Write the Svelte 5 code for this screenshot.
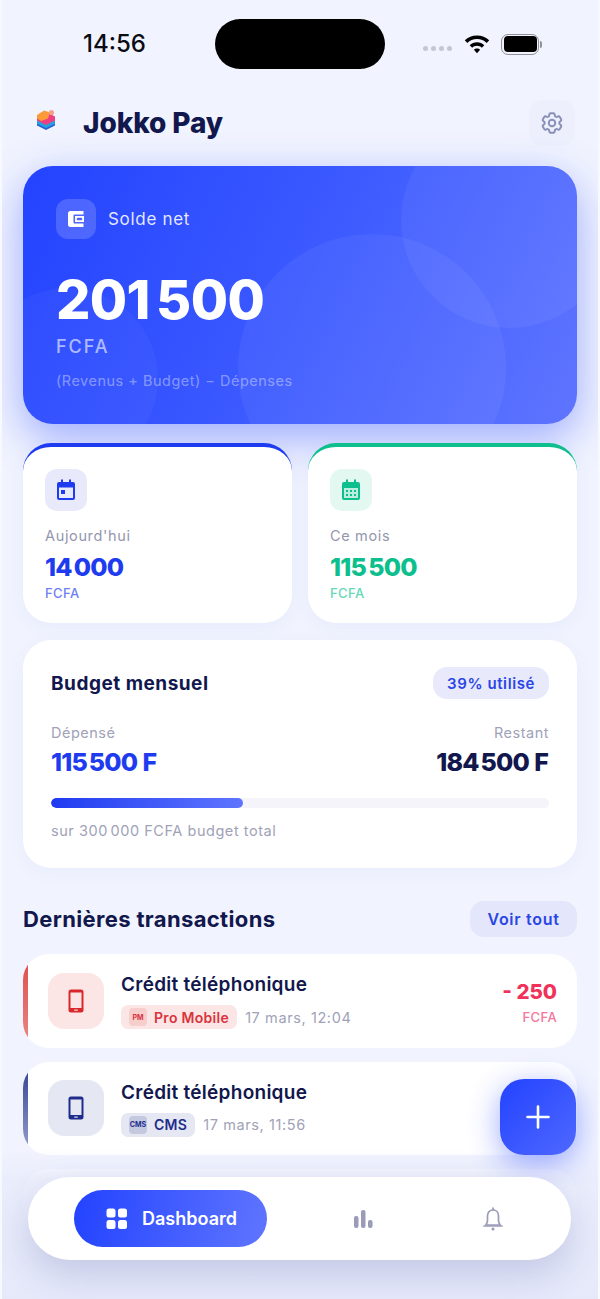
<script>
  const transactions = [
    { title: 'Crédit téléphonique', code: 'PM', name: 'Pro Mobile', date: '17 mars, 12:04', tone: 'red', amount: '- 250' },
    { title: 'Crédit téléphonique', code: 'CMS', name: 'CMS', date: '17 mars, 11:56', tone: 'navy', amount: '' }
  ];
</script>

<div class="phone">
  <div class="status">
    <span class="time">14:56</span>
    <div class="island"></div>
    <div class="status-right">
      <div class="dots"><i></i><i></i><i></i><i></i></div>
      <svg class="wifi" width="28" height="22" viewBox="0 0 28 20">
        <path d="M14 1.500c4.700 0 9 1.800 12.200 4.800l-2.500 2.600C21.200 6.500 17.800 5 14 5S6.800 6.500 4.300 8.900L1.800 6.300C5 3.300 9.300 1.500 14 1.500Z" />
        <path d="M14 8.300c2.800 0 5.400 1.100 7.300 2.900l-2.500 2.500c-1.300-1.200-3-1.900-4.800-1.900s-3.500.7-4.800 1.900l-2.500-2.500c1.900-1.800 4.500-2.900 7.300-2.900Z" />
        <path d="M14 14.600c1.200 0 2.300.5 3.100 1.200L14 19.200l-3.100-3.400c.8-.7 1.900-1.200 3.100-1.200Z" />
      </svg>
      <div class="battery"><div class="battery-fill"></div></div>
      <div class="battery-cap"></div>
    </div>
  </div>

  <header class="top">
    <div class="brand">
      <svg class="logo" width="20" height="22" viewBox="0 0 20 22">
        <path d="M10 10 19 14.500 19 16.500 10 21 1 16.500 1 14.500Z" fill="#2a63d8" />
        <path d="M1 11 10 6.500 19 11 19 14.500 10 19 1 14.500Z" fill="#23a3e0" />
        <path d="M1 7.500 10 3 19 7.500 19 11.500 10 16 1 11.500Z" fill="#ef3f83" />
        <path d="M1 6 8 1.500 14 3.500 12 9.500 5 12 1 9.500Z" fill="#fb9a37" />
        <circle cx="15.500" cy="3.500" r="2.600" fill="#f5a08c" />
      </svg>
      <h1>Jokko Pay</h1>
    </div>
    <button class="gear" aria-label="Paramètres">
      <svg width="26" height="26" viewBox="0 0 24 24" fill="none" stroke="#8a8fb5" stroke-width="1.800" stroke-linejoin="round">
        <path d="M9.594 3.940c.09-.542.56-.94 1.110-.94h2.593c.55 0 1.020.398 1.110.94l.213 1.281c.063.374.313.686.645.870.074.040.147.083.22.127.325.196.72.257 1.075.124l1.217-.456a1.125 1.125 0 0 1 1.370.49l1.296 2.247a1.125 1.125 0 0 1-.26 1.431l-1.003.827c-.293.241-.438.613-.43.992a7.723 7.723 0 0 1 0 .255c-.008.378.137.75.43.991l1.004.827c.424.35.534.955.26 1.430l-1.298 2.247a1.125 1.125 0 0 1-1.369.491l-1.217-.456c-.355-.133-.75-.072-1.076.124a6.470 6.470 0 0 1-.22.128c-.331.183-.581.495-.644.869l-.213 1.281c-.09.543-.56.94-1.110.94h-2.594c-.55 0-1.019-.398-1.110-.94l-.213-1.281c-.062-.374-.312-.686-.644-.87a6.520 6.520 0 0 1-.22-.127c-.325-.196-.72-.257-1.076-.124l-1.217.456a1.125 1.125 0 0 1-1.369-.49l-1.297-2.247a1.125 1.125 0 0 1 .26-1.431l1.004-.827c.292-.24.437-.613.43-.991a6.932 6.932 0 0 1 0-.255c.007-.38-.138-.751-.43-.992l-1.004-.827a1.125 1.125 0 0 1-.26-1.430l1.297-2.247a1.125 1.125 0 0 1 1.370-.491l1.216.456c.356.133.751.072 1.076-.124.072-.044.146-.086.22-.128.332-.183.582-.495.644-.869l.214-1.280Z" />
        <circle cx="12" cy="12" r="3" />
      </svg>
    </button>
  </header>

  <section class="hero">
    <div class="blob blob-a"></div>
    <div class="blob blob-b"></div>
    <div class="blob blob-c"></div>
    <div class="hero-head">
      <div class="hero-icon">
        <svg width="18" height="18" viewBox="0 0 18 18">
          <path d="M3.500 1h13v3.500h-9a1 1 0 0 0-1 1v7a1 1 0 0 0 1 1h9V17h-13A2.500 2.500 0 0 1 1 14.500v-11A2.500 2.500 0 0 1 3.500 1Z" fill="#fff" />
          <path fill-rule="evenodd" d="M8 6h9v6H8Zm3 1.700a1.300 1.300 0 1 0 0 2.600h3a1.300 1.300 0 1 0 0-2.600Z" fill="#fff" />
        </svg>
      </div>
      <span>Solde net</span>
    </div>
    <div class="hero-value">201 500</div>
    <div class="hero-cur">FCFA</div>
    <div class="hero-note">(Revenus + Budget) − Dépenses</div>
  </section>

  <div class="stats">
    <div class="stat stat-blue">
      <div class="stat-icon">
        <svg width="20" height="22" viewBox="0 0 20 22">
          <path fill-rule="evenodd" d="M5 0.500h2V3h6V0.500h2V3h2a2 2 0 0 1 2 2v14a2 2 0 0 1-2 2H3a2 2 0 0 1-2-2V5a2 2 0 0 1 2-2h2ZM3 8.500V19h14V8.500Z" fill="#1f3bf0" />
          <rect x="5" y="11" width="4" height="4" fill="#1f3bf0" />
        </svg>
      </div>
      <div class="stat-label">Aujourd'hui</div>
      <div class="stat-value">14 000</div>
      <div class="stat-cur">FCFA</div>
    </div>
    <div class="stat stat-green">
      <div class="stat-icon">
        <svg width="20" height="22" viewBox="0 0 20 22">
          <path fill-rule="evenodd" d="M5 0.500h2V3h6V0.500h2V3h2a2 2 0 0 1 2 2v14a2 2 0 0 1-2 2H3a2 2 0 0 1-2-2V5a2 2 0 0 1 2-2h2ZM3 9v10h14V9Z" fill="#0cbf8c" />
          <path d="M3 9h14v10H3Z" fill="#0cbf8c" opacity=".18" />
          <g fill="#0cbf8c">
            <rect x="5" y="11" width="2" height="2" /><rect x="9" y="11" width="2" height="2" /><rect x="13" y="11" width="2" height="2" />
            <rect x="5" y="15" width="2" height="2" /><rect x="9" y="15" width="2" height="2" /><rect x="13" y="15" width="2" height="2" />
          </g>
        </svg>
      </div>
      <div class="stat-label">Ce mois</div>
      <div class="stat-value">115 500</div>
      <div class="stat-cur">FCFA</div>
    </div>
  </div>

  <section class="budget">
    <div class="budget-head">
      <h2>Budget mensuel</h2>
      <span class="pill">39% utilisé</span>
    </div>
    <div class="budget-cols">
      <div>
        <div class="budget-label">Dépensé</div>
        <div class="budget-value blue"><span class="num">115 500</span> F</div>
      </div>
      <div class="right">
        <div class="budget-label">Restant</div>
        <div class="budget-value"><span class="num">184 500</span> F</div>
      </div>
    </div>
    <div class="bar"><div class="bar-fill" style="width: 38.500%"></div></div>
    <div class="budget-note">sur <span class="note-num">300 000</span> FCFA budget total</div>
  </section>

  <div class="section-head">
    <h2>Dernières transactions</h2>
    <button class="see-all">Voir tout</button>
  </div>

  <div class="list">
    {#each transactions as tx}
      <div class="tx {tx.tone}">
        <div class="tx-icon">
          <svg width="16" height="24" viewBox="0 0 16 24">
            <path fill-rule="evenodd" d="M3 0.500h10A2.500 2.500 0 0 1 15.500 3v18a2.500 2.500 0 0 1-2.500 2.500H3A2.500 2.500 0 0 1 .5 21V3A2.500 2.500 0 0 1 3 .5ZM2.500 3.500v15.500h11V3.500Z" fill="currentColor" />
            <rect x="6" y="20.500" width="4" height="1.200" rx=".6" fill="#fff" opacity=".8" />
          </svg>
        </div>
        <div class="tx-main">
          <div class="tx-title">{tx.title}</div>
          <div class="tx-meta">
            <span class="chip"><span class="chip-code">{tx.code}</span>{tx.name}</span>
            <span class="tx-date">{tx.date}</span>
          </div>
        </div>
        {#if tx.amount}
          <div class="tx-amount">
            <div class="amount">{tx.amount}</div>
            <div class="amount-cur">FCFA</div>
          </div>
        {/if}
      </div>
    {/each}
    <div class="tx ghost"></div>
  </div>

  <div class="fade"></div>

  <button class="fab" aria-label="Ajouter">
    <svg width="24" height="24" viewBox="0 0 24 24" fill="none" stroke="#fff" stroke-width="2.600" stroke-linecap="round">
      <path d="M12 1.500v21M1.500 12h21" />
    </svg>
  </button>

  <nav class="nav">
    <button class="nav-active">
      <svg width="22" height="22" viewBox="0 0 22 22" fill="#fff">
        <rect x="0.500" y="0.500" width="9" height="9" rx="2.500" /><rect x="12" y="0.500" width="9" height="9" rx="2.500" />
        <rect x="0.500" y="12" width="9" height="9" rx="2.500" /><rect x="12" y="12" width="9" height="9" rx="2.500" />
      </svg>
      Dashboard
    </button>
    <button class="nav-item" aria-label="Statistiques">
      <svg width="20" height="20" viewBox="0 0 20 20" fill="#9a9bb8">
        <rect x="1" y="7" width="4.500" height="12" rx="2" /><rect x="8" y="1" width="4.500" height="18" rx="2" /><rect x="15" y="11" width="4.500" height="8" rx="2" />
      </svg>
    </button>
    <button class="nav-item" aria-label="Notifications">
      <svg width="20" height="24" viewBox="0 0 20 24" fill="none" stroke="#9a9bb8" stroke-width="1.700" stroke-linecap="round" stroke-linejoin="round">
        <path d="M10 3c-3.600 0-5.500 2.700-5.500 6v4.500c0 1.700-.7 3.200-1.700 4.500h14.400c-1-1.300-1.700-2.800-1.700-4.500V9c0-3.300-1.900-6-5.500-6Z" />
        <path d="M10 1v2M1 19h18" />
        <circle cx="10" cy="22" r=".7" fill="#9a9bb8" />
      </svg>
    </button>
  </nav>
</div>

<style>
  :global(body) {
    margin: 0;
    background: #f1f4fe;
  }

  .phone {
    position: relative;
    width: 600px;
    height: 1299px;
    box-sizing: border-box;
    overflow: hidden;
    background: #f1f4fe;
    border-left: 2px solid #f8f9fe;
    border-right: 2px solid #f8f9fe;
    padding: 0 21px;
    font-family: Inter, "Noto Sans", sans-serif;
    font-optical-sizing: none;
    color: #12174d;
  }

  button {
    border: none;
    font-family: inherit;
    font-optical-sizing: none;
    padding: 0;
  }

  h1, h2 {
    margin: 0;
  }

  /* status bar */
  .status {
    height: 88px;
    display: flex;
    justify-content: space-between;
    align-items: flex-start;
    padding-left: 60px;
    position: relative;
  }

  .time {
    margin-top: 29px;
    font-size: 24px;
    line-height: 30px;
    font-weight: 500;
    color: #0c0c14;
  }

  .island {
    position: absolute;
    left: 192px;
    top: 19px;
    width: 170px;
    height: 50px;
    border-radius: 25px;
    background: #000;
  }

  .status-right {
    display: flex;
    align-items: center;
    margin-top: 33px;
    margin-right: 35px;
    height: 22px;
  }

  .dots {
    display: flex;
    gap: 3px;
    margin-right: 11px;
    margin-top: 8px;
  }

  .dots i {
    width: 5px;
    height: 5px;
    border-radius: 50%;
    background: #c4c6d0;
  }

  .wifi {
    fill: #000;
    margin-right: 10px;
  }

  .battery {
    box-sizing: border-box;
    width: 38px;
    height: 21px;
    border: 1.500px solid #8f8f95;
    border-radius: 7px;
    padding: 1.500px;
  }

  .battery-fill {
    height: 100%;
    background: #000;
    border-radius: 4px;
  }

  .battery-cap {
    width: 2px;
    height: 7px;
    margin-left: 1px;
    background: #8f8f95;
    border-radius: 0 2px 2px 0;
  }

  /* header */
  .top {
    display: flex;
    justify-content: space-between;
    align-items: center;
    height: 48px;
    margin-top: 11px;
    padding-left: 13px;
  }

  .brand {
    display: flex;
    align-items: center;
    gap: 27px;
  }

  .logo {
    margin-top: -6px;
  }

  h1 {
    font-size: 28px;
    line-height: 34px;
    font-weight: 800;
    letter-spacing: -0.1px;
    color: #12174d;
  }

  .gear {
    width: 46px;
    height: 46px;
    margin-right: 2px;
    border-radius: 14px;
    background: #edf0fc;
    display: flex;
    align-items: center;
    justify-content: center;
  }

  /* hero card */
  .hero {
    position: relative;
    height: 258px;
    box-sizing: border-box;
    margin-top: 19px;
    padding: 33px 33px 0;
    border-radius: 30px;
    overflow: hidden;
    background: linear-gradient(115deg, #2343ff 0%, #3c5aff 50%, #5f75ff 100%);
    box-shadow: 0 14px 44px rgba(37, 69, 255, 0.42);
    color: #fff;
  }

  .blob {
    position: absolute;
    border-radius: 50%;
    background: rgba(255, 255, 255, 0.05);
  }

  .blob-a {
    left: 378px;
    top: -54px;
    width: 216px;
    height: 216px;
  }

  .blob-b {
    left: 215px;
    top: 68px;
    width: 268px;
    height: 268px;
  }

  .blob-c {
    left: -46px;
    top: 122px;
    width: 181px;
    height: 181px;
    background: rgba(255, 255, 255, 0.035);
  }

  .hero-head {
    position: relative;
    display: flex;
    align-items: center;
    gap: 12px;
    font-size: 17px;
    letter-spacing: 0.7px;
    color: rgba(255, 255, 255, 0.88);
  }

  .hero-icon {
    width: 40px;
    height: 40px;
    border-radius: 12px;
    background: rgba(255, 255, 255, 0.17);
    display: flex;
    align-items: center;
    justify-content: center;
  }

  .hero-value {
    position: relative;
    margin-top: 28px;
    font-size: 54px;
    line-height: 66px;
    font-weight: 800;
    letter-spacing: -0.6px;
    word-spacing: -5px;
  }

  .hero-cur {
    position: relative;
    margin-top: 2px;
    font-size: 18px;
    line-height: 24px;
    letter-spacing: 2px;
    font-weight: 500;
    color: rgba(255, 255, 255, 0.62);
  }

  .hero-note {
    position: relative;
    margin-top: 12px;
    font-size: 14.500px;
    line-height: 20px;
    letter-spacing: 0.5px;
    color: rgba(255, 255, 255, 0.4);
  }

  /* today / month */
  .stats {
    display: grid;
    grid-template-columns: 269px 269px;
    gap: 16px;
    margin-top: 19px;
    position: relative;
  }

  .stat {
    height: 180px;
    box-sizing: border-box;
    padding: 22px 22px 0;
    background: #fff;
    border-radius: 28px;
    border-top: 4px solid;
    box-shadow: 0 4px 18px rgba(70, 90, 220, 0.06);
  }

  .stat-blue {
    border-color: #1f3bf0;
  }

  .stat-green {
    border-color: #0cbf8c;
  }

  .stat-icon {
    width: 42px;
    height: 42px;
    border-radius: 12px;
    display: flex;
    align-items: center;
    justify-content: center;
  }

  .stat-blue .stat-icon {
    background: #e8eafb;
  }

  .stat-green .stat-icon {
    background: #e3f8f1;
  }

  .stat-label {
    margin-top: 16px;
    font-size: 14.500px;
    line-height: 18px;
    letter-spacing: 0.65px;
    color: #9496ae;
  }

  .stat-value {
    margin-top: 6px;
    font-size: 25px;
    line-height: 32px;
    font-weight: 800;
    letter-spacing: -0.8px;
    word-spacing: -2.500px;
  }

  .stat-cur {
    margin-top: 1px;
    font-size: 13px;
    line-height: 18px;
    font-weight: 500;
    letter-spacing: 0.4px;
  }

  .stat-blue .stat-value {
    color: #1f3bf0;
  }

  .stat-blue .stat-cur {
    color: #6f80f3;
  }

  .stat-green .stat-value {
    color: #0cbf8c;
  }

  .stat-green .stat-cur {
    color: #66d8b8;
  }

  /* budget */
  .budget {
    height: 228px;
    box-sizing: border-box;
    margin-top: 17px;
    padding: 27px 28px 0;
    background: #fff;
    border-radius: 28px;
    box-shadow: 0 4px 18px rgba(70, 90, 220, 0.05);
  }

  .budget-head {
    display: flex;
    justify-content: space-between;
    align-items: center;
    height: 32px;
  }

  .budget-head h2 {
    font-size: 19px;
    font-weight: 700;
    letter-spacing: 0.5px;
    color: #12174d;
  }

  .pill {
    height: 32px;
    padding: 0 14px;
    display: flex;
    align-items: center;
    border-radius: 14px;
    background: #e8eafb;
    font-size: 15px;
    font-weight: 600;
    letter-spacing: 0.6px;
    color: #2a45e6;
  }

  .budget-cols {
    display: flex;
    justify-content: space-between;
    margin-top: 24px;
  }

  .right {
    text-align: right;
  }

  .budget-label {
    font-size: 14.500px;
    line-height: 20px;
    letter-spacing: 0.5px;
    color: #a0a2b8;
  }

  .budget-value {
    margin-top: 4px;
    font-size: 25px;
    line-height: 30px;
    font-weight: 800;
    color: #12174d;
  }

  .num {
    letter-spacing: -0.8px;
    word-spacing: -3px;
  }

  .budget-value.blue {
    color: #1f3bf0;
  }

  .bar {
    height: 10px;
    margin-top: 21px;
    border-radius: 6px;
    background: #f4f4fa;
    overflow: hidden;
  }

  .bar-fill {
    height: 100%;
    border-radius: 6px;
    background: linear-gradient(90deg, #1f3bf0, #5f75ff);
  }

  .budget-note {
    margin-top: 13px;
    font-size: 14.500px;
    line-height: 20px;
    letter-spacing: 0.55px;
    color: #a0a2b8;
  }

  .note-num {
    word-spacing: -2px;
  }

  /* transactions */
  .section-head {
    display: flex;
    justify-content: space-between;
    align-items: center;
    height: 36px;
    margin-top: 33px;
  }

  .section-head h2 {
    font-size: 22px;
    font-weight: 700;
    letter-spacing: 0.35px;
    color: #12174d;
  }

  .see-all {
    width: 107px;
    height: 36px;
    border-radius: 14px;
    background: #e4e7fb;
    font-size: 16px;
    font-weight: 600;
    letter-spacing: 0.7px;
    color: #2a45e6;
  }

  .list {
    display: flex;
    flex-direction: column;
    gap: 14px;
    margin-top: 17px;
  }

  .tx {
    position: relative;
    height: 93.500px;
    flex: none;
    box-sizing: border-box;
    display: flex;
    align-items: center;
    padding: 0 20px 0 25px;
    background: #fff;
    border-radius: 26px;
    overflow: hidden;
  }

  /* colored edge, clipped by the card corners */
  .tx::before {
    content: '';
    position: absolute;
    left: 0;
    top: 0;
    bottom: 0;
    width: 5px;
  }

  .tx.red {
    color: #d8282c;
  }

  .tx.red::before {
    background: linear-gradient(180deg, #dc4a4a, #ea8a88);
  }

  .tx.navy {
    color: #1e2c8c;
  }

  .tx.navy::before {
    background: linear-gradient(180deg, #2f3d8f, #9aa3d0);
  }

  .tx-icon {
    width: 56px;
    height: 56px;
    flex: none;
    border-radius: 16px;
    display: flex;
    align-items: center;
    justify-content: center;
  }

  .red .tx-icon {
    background: #fbe6e5;
  }

  .navy .tx-icon {
    background: #e5e7f2;
  }

  .tx-main {
    flex: 1;
    margin-left: 17px;
  }

  .tx-title {
    font-size: 19px;
    line-height: 26px;
    font-weight: 600;
    letter-spacing: 0.27px;
    color: #12174d;
  }

  .tx-meta {
    display: flex;
    align-items: center;
    gap: 8px;
    margin-top: 7px;
  }

  .chip {
    height: 24px;
    display: flex;
    align-items: center;
    gap: 7px;
    padding: 0 8px;
    border-radius: 7px;
    font-size: 14px;
    font-weight: 600;
    letter-spacing: 0.3px;
  }

  .red .chip {
    background: #fbe6e5;
    color: #d9333e;
  }

  .navy .chip {
    background: #e5e7f2;
  }

  .chip-code {
    width: 18px;
    height: 18px;
    display: flex;
    align-items: center;
    justify-content: center;
    border-radius: 4px;
    font-size: 7px;
    font-weight: 700;
    letter-spacing: 0;
  }

  .red .chip-code {
    background: #f6cfcd;
  }

  .navy .chip-code {
    background: #c5c9e0;
  }

  .tx-date {
    font-size: 14.500px;
    letter-spacing: 0.6px;
    color: #a0a2b8;
  }

  .tx-amount {
    text-align: right;
    margin-top: 3px;
  }

  .amount {
    font-size: 20.500px;
    line-height: 26px;
    font-weight: 800;
    color: #f0325a;
  }

  .amount-cur {
    margin-top: 3px;
    font-size: 13px;
    line-height: 18px;
    font-weight: 500;
    letter-spacing: 0.4px;
    color: #f4769a;
  }

  /* bottom overlays */
  .fade {
    position: absolute;
    left: 0;
    right: 0;
    bottom: 0;
    height: 150px;
    background: linear-gradient(180deg, rgba(232, 235, 251, 0), rgba(232, 235, 251, 0.8) 20%, #e8ebfa 60%, #e6e9fa);
  }

  .fab {
    position: absolute;
    left: 498px;
    top: 1079px;
    width: 76px;
    height: 76px;
    border-radius: 24px;
    background: linear-gradient(135deg, #2343ff, #4f68ff);
    box-shadow: 0 8px 30px rgba(37, 69, 255, 0.45);
    display: flex;
    align-items: center;
    justify-content: center;
  }

  .nav {
    position: absolute;
    left: 26px;
    top: 1177px;
    width: 543px;
    height: 83px;
    box-sizing: border-box;
    padding: 13px 46px 0;
    display: flex;
    align-items: flex-start;
    background: #fff;
    border-radius: 42px;
    box-shadow: 0 14px 36px rgba(50, 60, 150, 0.2);
  }

  .nav-active {
    width: 193px;
    height: 57px;
    display: flex;
    align-items: center;
    justify-content: center;
    gap: 14px;
    padding-left: 2px;
    border-radius: 29px;
    background: linear-gradient(100deg, #2343ff, #5f75ff);
    color: #fff;
    font-size: 18px;
    font-weight: 600;
  }

  .nav-item {
    height: 57px;
    width: 60px;
    display: flex;
    align-items: center;
    justify-content: center;
    background: none;
    margin-left: 66px;
  }

  .nav-item + .nav-item {
    margin-left: 70px;
  }
</style>
